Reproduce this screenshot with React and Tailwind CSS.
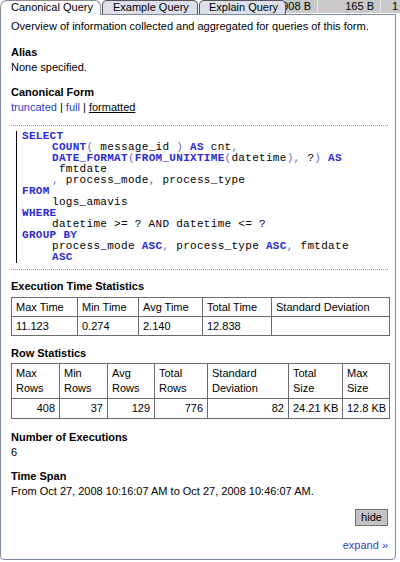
export default function App() {
  const kw = "font-bold text-[#2b2bd6]";
  const pu = "text-[#6a6ad0]";
  const th = "border border-[#6b6b6b] px-[4px] py-0 text-left font-normal align-middle";
  const td2h = "border border-[#6b6b6b] px-[4px] pt-[2px] pb-[2px] text-left font-normal align-top leading-[15px]";
  const td2 = "border border-[#6b6b6b] px-[4px] py-0 text-right align-middle";
  return (
    <div className="w-[400px] h-[562px] bg-white overflow-hidden font-['Liberation_Sans',Arial,sans-serif] text-[11px] leading-[15px] text-black">
      {/* tab row */}
      <div className="flex h-[14px] items-start">
        <div className="relative z-10 w-[101px] h-[15px] shrink-0 bg-white border-t border-l border-r border-[#8c8c8c] rounded-tl-[7px] rounded-tr-[6px] pl-[10px] leading-[13px]">
          Canonical Query
        </div>
        <div className="relative z-10 ml-[1px] w-[96px] h-[14px] shrink-0 bg-[#dde0ea] border-t border-l border-r border-[#555] rounded-t-[5px] pl-[10px] leading-[12px]">
          Example Query
        </div>
        <div className="relative z-10 ml-[1px] w-[87px] h-[14px] shrink-0 bg-[#dde0ea] border-t border-l border-r border-[#555] rounded-t-[5px] pl-[9px] leading-[12px]">
          Explain Query
        </div>
        <div className="-ml-[8px] flex-1 h-[13px] bg-[#c9c9c9] flex leading-[12px]">
          <div className="w-[40px] shrink-0 border-r border-[#e4e4e4] text-right pr-[6px]">908 B</div>
          <div className="w-[63px] shrink-0 border-r border-[#e4e4e4] text-right pr-[6px]">165 B</div>
          <div className="flex-1 pl-[11px] whitespace-nowrap overflow-hidden">1</div>
        </div>
      </div>

      {/* panel */}
      <div className="relative w-[396px] h-[546px] border border-[#7c8aa3] rounded-b-[4px] pl-[10px] pr-[7px] pt-[4px]">
        <div>Overview of information collected and aggregated for queries of this form.</div>

        <div className="mt-[11px] font-bold">Alias</div>
        <div>None specified.</div>

        <div className="mt-[10px] font-bold">Canonical Form</div>
        <div>
          <span className="text-[#2f3fc8]">truncated</span> | <span className="text-[#2f3fc8]">full</span> |{" "}
          <span className="underline">formatted</span>
        </div>

        <div className="mt-[10px] border-t border-dotted border-[#9a9a9a]" />

        <div className="mt-[5px] ml-[5px] border-l border-black pl-[5px] font-['Liberation_Mono',monospace] text-[11px] tracking-[0.3px] leading-[11px] whitespace-pre text-black">
          <div><span className={kw}>SELECT</span></div>
          <div className="pl-[30px]">
            <span className={kw}>COUNT</span><span className={pu}>(</span> message_id <span className={pu}>)</span> <span className={kw}>AS</span> cnt<span className={pu}>,</span>
          </div>
          <div className="pl-[30px]">
            <span className={kw}>DATE_FORMAT</span><span className={pu}>(</span><span className={kw}>FROM_UNIXTIME</span><span className={pu}>(</span>datetime<span className={pu}>),</span> ?<span className={pu}>)</span> <span className={kw}>AS</span>
          </div>
          <div className="pl-[30px]"> fmtdate</div>
          <div className="pl-[30px]">
            <span className={pu}>,</span> process_mode<span className={pu}>,</span> process_type
          </div>
          <div><span className={kw}>FROM</span></div>
          <div className="pl-[30px]">logs_amavis</div>
          <div><span className={kw}>WHERE</span></div>
          <div className="pl-[30px]">datetime &gt;= ? AND datetime &lt;= ?</div>
          <div><span className={kw}>GROUP BY</span></div>
          <div className="pl-[30px]">
            process_mode <span className={kw}>ASC</span><span className={pu}>,</span> process_type <span className={kw}>ASC</span><span className={pu}>,</span> fmtdate
          </div>
          <div className="pl-[30px]"><span className={kw}>ASC</span></div>
        </div>

        <div className="mt-[6px] border-t border-dotted border-[#9a9a9a]" />

        <div className="mt-[9px] font-bold">Execution Time Statistics</div>
        <table className="mt-[3px] w-[378px] table-fixed border-collapse">
          <colgroup>
            <col className="w-[66px]" />
            <col className="w-[61px]" />
            <col className="w-[64px]" />
            <col className="w-[69px]" />
            <col className="w-[118px]" />
          </colgroup>
          <tbody>
            <tr className="h-[19px]">
              <td className={th}>Max Time</td>
              <td className={th}>Min Time</td>
              <td className={th}>Avg Time</td>
              <td className={th}>Total Time</td>
              <td className={th}>Standard Deviation</td>
            </tr>
            <tr className="h-[19px]">
              <td className={th}>11.123</td>
              <td className={th}>0.274</td>
              <td className={th}>2.140</td>
              <td className={th}>12.838</td>
              <td className={th}></td>
            </tr>
          </tbody>
        </table>

        <div className="mt-[10px] font-bold">Row Statistics</div>
        <table className="mt-[2px] w-[378px] table-fixed border-collapse">
          <colgroup>
            <col className="w-[48px]" />
            <col className="w-[48px]" />
            <col className="w-[47px]" />
            <col className="w-[53px]" />
            <col className="w-[81px]" />
            <col className="w-[54px]" />
            <col className="w-[47px]" />
          </colgroup>
          <tbody>
            <tr className="h-[34px]">
              <td className={td2h}>Max<br />Rows</td>
              <td className={td2h}>Min<br />Rows</td>
              <td className={td2h}>Avg<br />Rows</td>
              <td className={td2h}>Total<br />Rows</td>
              <td className={td2h}>Standard<br />Deviation</td>
              <td className={td2h}>Total<br />Size</td>
              <td className={td2h}>Max<br />Size</td>
            </tr>
            <tr className="h-[20px]">
              <td className={td2}>408</td>
              <td className={td2}>37</td>
              <td className={td2}>129</td>
              <td className={td2}>776</td>
              <td className={td2}>82</td>
              <td className={td2 + " whitespace-nowrap"}>24.21 KB</td>
              <td className={td2 + " whitespace-nowrap"}>12.8 KB</td>
            </tr>
          </tbody>
        </table>

        <div className="mt-[11px] font-bold">Number of Executions</div>
        <div>6</div>

        <div className="mt-[9px] font-bold">Time Span</div>
        <div>From Oct 27, 2008 10:16:07 AM to Oct 27, 2008 10:46:07 AM.</div>

        <div className="mt-[10px] flex justify-end">
          <button className="h-[17px] w-[33px] bg-[#c4c4c4] border border-[#6f6f6f] text-[11px] leading-[15px] font-['Liberation_Sans',Arial,sans-serif] text-black">
            hide
          </button>
        </div>

        <div className="mt-[12px] text-right text-[#2f3fc8]">expand »</div>
      </div>
    </div>
  );
}
